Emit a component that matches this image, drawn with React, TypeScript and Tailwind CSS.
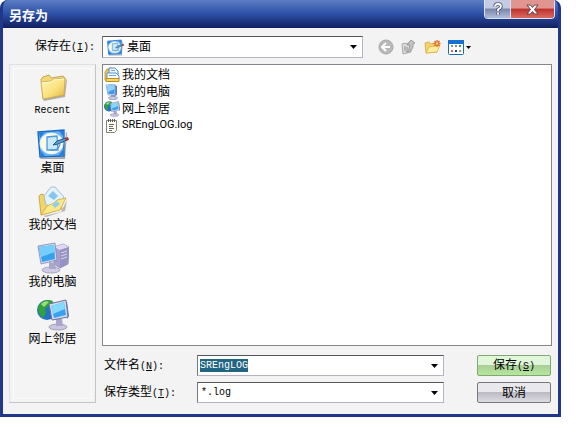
import React from 'react';

const latin = "font-['Liberation_Mono','Noto_Sans_CJK_SC',monospace] text-[10px]";

function FolderIcon() {
  return (
    <svg width="32" height="32" viewBox="0 0 32 32" aria-hidden="true">
      <defs>
        <linearGradient id="folder" x1="0" y1="0" x2="1" y2="1">
          <stop offset="0" stopColor="#fff7b8" />
          <stop offset="0.55" stopColor="#fbe27e" />
          <stop offset="1" stopColor="#e0b23e" />
        </linearGradient>
      </defs>
      <path d="M6 28 L27 24 L29 8 L30 9 L28 26 L7 30Z" fill="#777" opacity="0.55" />
      <path d="M4 8 L6 6 L12 4 L14 7 L26 5 L28 7 L27 24 L6 28Z" fill="#f3d772" stroke="#b8974a" strokeWidth="0.8" />
      <path d="M4 11 L14 10 L17 8 L28 7 L27 24 L6 28Z" fill="url(#folder)" stroke="#cda94c" strokeWidth="0.8" />
      <path d="M5 12 L14 11 L17 9 L27 8" fill="none" stroke="#fffbd6" />
    </svg>
  );
}

function DesktopIcon({ size = 32 }: { size?: number }) {
  return (
    <svg width={size} height={size} viewBox="0 0 32 32" aria-hidden="true">
      <path d="M3 30 L27 29 L29 4 L30 5 L28 31 L4 31Z" fill="#555" opacity="0.5" />
      <path d="M1 4 L27 2 L27 28 L3 29Z" fill="#5fb2f4" stroke="#1c6ac4" strokeWidth="1.4" />
      <path d="M2 5 L8 4 L3 10Z M22 3 L26 3 L26 8Z M3 22 L8 28 L4 28Z M26 22 L26 27 L21 28Z" fill="#2b7cdc" />
      <ellipse cx="14.500" cy="15.500" rx="11.500" ry="10.500" fill="#fbfbe4" stroke="#dff0fa" />
      <path d="M10 9 L20 8 L21 22 L10 22Z" fill="#c9e9fc" stroke="#4c97e0" strokeWidth="1.3" />
      <path d="M13 22 Q22 23 23 16" fill="none" stroke="#4e95dc" strokeWidth="1.2" />
      <path d="M16 17 L20 13 L29 10 L30 12 L21 16Z" fill="#5aa0d4" stroke="#24588f" />
      <path d="M28 10 L31 9 L32 12 L29 13Z" fill="#a8322c" />
    </svg>
  );
}

function DocumentsIcon() {
  return (
    <svg width="32" height="32" viewBox="0 0 32 32" aria-hidden="true">
      <path d="M6 31 L24 27 L30 15 L28 26 L9 32Z" fill="#777" opacity="0.5" />
      <path d="M2 11 L4 9 L7 10 L9 12 L23 9 L25 24 L4 30Z" fill="#f2d566" stroke="#c09a3c" strokeWidth="0.8" />
      <path d="M7 11 L14 2 L18 2 L27 12 L22 23 L9 20Z" fill="#e4f2fc" stroke="#8db4d2" strokeWidth="0.8" />
      <path d="M11 11 L16 6 L21 11 L17 15Z" fill="#88c4f0" />
      <path d="M4 30 L10 21 L17 18 L20 15 L29 13 L23 25Z" fill="#fbe88a" stroke="#d0a943" strokeWidth="0.8" />
      <path d="M15 20 L20 16 L23 19 L18 23Z" fill="#8fd0ee" />
    </svg>
  );
}

function ComputerIcon() {
  return (
    <svg width="32" height="32" viewBox="0 0 32 32" aria-hidden="true">
      <path d="M17 5 L26 2 L32 5 L31 22 L23 26 L17 22Z" fill="#a5a0ce" stroke="#8a86b4" strokeWidth="0.8" />
      <path d="M17 5 L26 2 L32 5 L23 8Z" fill="#dcdaf0" />
      <path d="M23 8 L32 5 L31 22 L23 26Z" fill="#9692c2" />
      <path d="M24 11 L30 9 M24 14 L30 12 M24 17 L30 15" stroke="#d9d7ec" />
      <ellipse cx="14" cy="28" rx="9" ry="3" fill="#cfcbe4" stroke="#9a96bb" strokeWidth="0.8" />
      <path d="M12 20 L18 21 L19 27 L12 27Z" fill="#aaa6ca" />
      <path d="M1 4 L18 1 L20 18 L4 22Z" fill="#d5d6ec" stroke="#7d86b2" strokeWidth="0.8" />
      <path d="M2 5 L17 3 L18 17 L5 20Z" fill="#36a2ee" />
      <path d="M2 5 L17 3 L18 10 L4 15Z" fill="#74cffc" />
    </svg>
  );
}

function NetworkIcon({ size = 32 }: { size?: number }) {
  return (
    <svg width={size} height={size} viewBox="0 0 32 32" aria-hidden="true">
      <circle cx="10" cy="11" r="10" fill="#2372c8" />
      <path d="M2 6 Q8 -1 16 2 L13 7 L8 9 L9 14 L6 19 Q1 15 1 9Z" fill="#31a13b" />
      <path d="M4 5 Q8 1 12 3 L7 8Z" fill="#9be073" />
      <path d="M30 3 L32 17 L30 20 L28 3Z" fill="#706b9b" />
      <ellipse cx="21" cy="28" rx="9" ry="3" fill="#cac6df" stroke="#928eb3" strokeWidth="0.8" />
      <path d="M19 20 L25 20 L26 27 L19 27Z" fill="#aaa5ca" />
      <path d="M12 5 L29 1 L31 18 L15 21Z" fill="#d9dbed" stroke="#6873a2" />
      <path d="M14 7 L27 3 L29 16 L17 19Z" fill="#36a2ee" />
      <path d="M14 7 L27 3 L28 10 L16 15Z" fill="#84dafa" />
    </svg>
  );
}

function SmallComputerIcon() {
  return (
    <svg width="16" height="16" viewBox="0 0 16 16" aria-hidden="true">
      <path d="M11 1 L13 2 V11 L11 12Z" fill="#6b78ae" />
      <path d="M2 1 L11 0 V11 L4 11Z" fill="#dbe4f6" stroke="#8fa6d2" strokeWidth="0.8" />
      <path d="M3 2 L10.500 1 V10 L4.500 10Z" fill="#3f9aee" />
      <path d="M3 2 L10.500 1 V5 L4 8Z" fill="#8fd2fc" />
      <path d="M7 11 H11 V13 H7Z" fill="#8d93c0" />
      <ellipse cx="9" cy="14" rx="4.500" ry="1.600" fill="#c9cce4" stroke="#8f93ba" strokeWidth="0.8" />
    </svg>
  );
}

function SmallDocumentsIcon() {
  return (
    <svg width="16" height="16" viewBox="0 0 16 16" aria-hidden="true">
      <path d="M1 5 L3 2 H7 V14 H2 L1 13Z" fill="#f5c94c" stroke="#b9892a" strokeWidth="0.8" />
      <path d="M5 1 H11 L14 4 V9 H5Z" fill="#f0f7ff" stroke="#4f87c6" />
      <path d="M3 6 H12 L15 9 V12 H3Z" fill="#fff" stroke="#5b92cf" />
      <path d="M7 3.500 H11 M5 8.500 H12" stroke="#69a9df" />
      <path d="M2 14.500 V11.500 H15 V14.500Z" fill="#fbd768" stroke="#bf8c25" />
    </svg>
  );
}

function LogIcon() {
  return (
    <svg width="16" height="16" viewBox="0 0 16 16" aria-hidden="true">
      <path d="M2.500 2.500 H12.500 V12.500 L10.500 14.500 H2.500Z" fill="#fffff0" stroke="#85857a" />
      <path d="M4.500 1 V4 M6.500 1 V4 M8.500 1 V4 M10.500 1 V4" stroke="#5c5c54" />
      <path d="M5 6.500 H10 M5 8.500 H9 M5 10.500 H10 M5 12.500 H8" stroke="#5f6b78" />
    </svg>
  );
}

const places = [
  { label: 'Recent', icon: <FolderIcon />, mono: true },
  { label: '桌面', icon: <DesktopIcon /> },
  { label: '我的文档', icon: <DocumentsIcon /> },
  { label: '我的电脑', icon: <ComputerIcon /> },
  { label: '网上邻居', icon: <NetworkIcon /> },
];

const files = [
  { label: '我的文档', icon: <SmallDocumentsIcon /> },
  { label: '我的电脑', icon: <SmallComputerIcon /> },
  { label: '网上邻居', icon: <NetworkIcon size={16} /> },
  { label: 'SREngLOG.log', icon: <LogIcon />, latin: true },
];

function Arrow() {
  return (
    <svg width="7" height="4" viewBox="0 0 7 4" className="shrink-0 pointer-events-none" aria-hidden="true">
      <path d="M0 0 H7 L3.500 4Z" fill="#000" />
    </svg>
  );
}

function Accel({ letter, colon = true }: { letter: string; colon?: boolean }) {
  return (
    <span className={latin}>
      (<u className="underline-offset-1">{letter}</u>){colon && ':'}
    </span>
  );
}

const box = 'flex items-center border border-[#b4b4c2] border-t-[#55555c] border-l-[#77777f] bg-white';

export default function App() {
  const nameRef = React.useRef<HTMLInputElement>(null);

  React.useEffect(() => {
    nameRef.current?.focus();
    nameRef.current?.select();
  }, []);

  return (
    <div className="bg-white pr-[15px] font-['Liberation_Sans','Noto_Sans_CJK_SC',sans-serif] text-xs text-black">
      <div className="overflow-hidden rounded-t-lg border-x-[3px] border-b-[3px] border-[#21388a] bg-[#21388a]">
        <header className="-mx-[3px] flex h-7 items-start justify-between bg-linear-to-b from-[#5c7dc4] via-[#2d4fa6] to-[#11205f] pr-1.5 pl-[9px]">
          <h1 className="pt-2 text-[13px] leading-4 font-bold text-white">另存为</h1>
          <div className="flex h-[19px] overflow-hidden rounded-b-[4px] border border-t-0 border-[#dce2f2]">
            <button type="button" aria-label="帮助" className="flex w-[26px] items-center justify-center border-r border-[#dce2f2] bg-linear-to-b from-[#c3cce2] from-45% via-[#7685ab] via-50% to-[#b3bedb]">
              <svg width="12" height="14" viewBox="0 0 12 14" aria-hidden="true">
                <path d="M3 4.500 Q3 2 6 2 Q9 2 9 4.500 Q9 6 6 7.500 V9 M6 10.500 V12.500" fill="none" stroke="#4c5470" strokeWidth="3.500" />
                <path d="M3 4.500 Q3 2 6 2 Q9 2 9 4.500 Q9 6 6 7.500 V9 M6 10.500 V12.500" fill="none" stroke="#fff" strokeWidth="1.800" />
              </svg>
            </button>
            <button type="button" aria-label="关闭" className="flex w-[43px] items-center justify-center bg-linear-to-b from-[#e09590] from-45% via-[#bb2f2d] via-50% to-[#dd6a5e]">
              <svg width="13" height="11" viewBox="0 0 13 11" aria-hidden="true">
                <path d="M1 1 H4.500 L6.500 3.500 L8.500 1 H12 L8.500 5.500 L12 10 H8.500 L6.500 7.500 L4.500 10 H1 L4.500 5.500Z" fill="#fff" stroke="#634050" />
              </svg>
            </button>
          </div>
        </header>

        <main className="bg-[#f3f3f3] pt-2 pr-1.5 pb-[11px] pl-1.5">
          <div className="flex items-center">
            <label htmlFor="folder-select" className="w-[93px] shrink-0 pl-[26px] leading-4 whitespace-nowrap">
              保存在<Accel letter="I" />
            </label>
            <div className={`${box} h-[22px] w-[48%] pr-[5px] pl-1`}>
              <DesktopIcon size={17} />
              <select id="folder-select" className="h-full flex-1 appearance-none bg-transparent pl-[3px] outline-none">
                <option>桌面</option>
              </select>
              <Arrow />
            </div>
            <div className="flex items-center gap-[7px] pl-[15px]">
              <button type="button" aria-label="后退">
                <svg width="16" height="16" viewBox="0 0 16 16" aria-hidden="true">
                  <circle cx="8" cy="8" r="7" fill="#b9b9b9" stroke="#a8a8a8" />
                  <path d="M12 8 H5 M8 4 L4 8 L8 12" fill="none" stroke="#fff" strokeWidth="2" />
                </svg>
              </button>
              <button type="button" aria-label="向上一级">
                <svg width="16" height="16" viewBox="0 0 16 16" aria-hidden="true">
                  <path d="M1 5 L4 4 L5 5 L10 3 V13 L2 15Z" fill="#dcdcdc" stroke="#a9a9a9" />
                  <path d="M5 13 Q9 11 9 6 L6 6 L10 1 L14 4 L12 5 Q13 12 5 13Z" fill="#c4c4c4" stroke="#8b8b8b" strokeWidth="0.8" />
                  <path d="M4 7 V12 M6 8 V11" stroke="#929292" />
                </svg>
              </button>
              <button type="button" aria-label="新建文件夹">
                <svg width="17" height="16" viewBox="0 0 17 16" aria-hidden="true">
                  <path d="M1 4 L5 3 L7 5 L12 4 L13 13 L2 14Z" fill="#f6d26a" stroke="#cfa647" strokeWidth="0.8" />
                  <path d="M2 14 L5 8 L16 6 L13 13Z" fill="#ffee9c" stroke="#d8af4f" strokeWidth="0.8" />
                  <path d="M13 1 V8 M9.500 4.500 H16.500 M10.500 2 L15.500 7 M15.500 2 L10.500 7" stroke="#e06b22" strokeWidth="1.3" />
                  <circle cx="13" cy="4.500" r="1.300" fill="#ffd67a" />
                </svg>
              </button>
              <button type="button" aria-label="查看" className="flex items-center gap-0.5">
                <svg width="16" height="15" viewBox="0 0 16 15" aria-hidden="true">
                  <rect x="0.500" y="0.500" width="15" height="14" rx="1" fill="#fff" stroke="#176bc2" />
                  <path d="M0 0 H16 V4 H0Z" fill="#1670cf" />
                  <path d="M3 5 H5 V7 H3Z M11 10 H13 V12 H11Z" fill="#8a9a72" />
                  <path d="M7 5 H9 V7 H7Z" fill="#5b8fd6" />
                  <path d="M11 5 H13 V7 H11Z" fill="#3b9551" />
                  <path d="M3 10 H5 V12 H3Z" fill="#d06951" />
                  <path d="M7 10 H9 V12 H7Z" fill="#233f91" />
                </svg>
                <svg width="5" height="3" viewBox="0 0 5 3" aria-hidden="true">
                  <path d="M0 0 H5 L2.500 3Z" fill="#000" />
                </svg>
              </button>
            </div>
          </div>

          <div className="mt-1.5 flex gap-1.5">
            <nav className="flex w-[87px] shrink-0 flex-col gap-[9px] border border-[#e0e0e4] border-r-[#c3c3ca] border-b-[#c3c3ca] bg-[#f4f4f4] pt-1.5 shadow-[inset_0_0_0_3px_#f3f3f3,inset_0_0_0_4px_#fbfbfb]">
              {places.map((place) => (
                <button key={place.label} type="button" className="flex flex-col items-center">
                  {place.icon}
                  <span className={`leading-4 ${place.mono ? "font-['Liberation_Mono',monospace] text-[10px]" : ''}`}>{place.label}</span>
                </button>
              ))}
            </nav>

            <div className="min-w-0 flex-1">
              <ul className="min-h-[282px] border border-[#85858b] bg-white pt-px pl-px">
                {files.map((file) => (
                  <li key={file.label} className="flex h-[17px] items-center gap-0.5">
                    {file.icon}
                    <span className={file.latin ? "font-['Roboto',sans-serif] text-[11px]" : ''}>{file.label}</span>
                  </li>
                ))}
              </ul>

              <div className="mt-[9px] flex gap-[33px] pr-px">
                <div className="grid flex-1 grid-cols-[95px_1fr] items-center gap-y-[6px]">
                  <label htmlFor="file-name" className="pl-0.5">
                    文件名<Accel letter="N" />
                  </label>
                  <div className={`${box} h-[21px] pr-[5px] pl-0.5`}>
                    <input
                      id="file-name"
                      ref={nameRef}
                      defaultValue="SREngLOG"
                      className="min-w-0 flex-1 bg-transparent font-['Liberation_Mono',monospace] text-[10px] caret-transparent outline-none selection:bg-[#206582] selection:text-white"
                    />
                    <Arrow />
                  </div>
                  <label htmlFor="file-type" className="pl-0.5">
                    保存类型<Accel letter="T" />
                  </label>
                  <div className={`${box} h-[21px] pr-[5px] pl-[3px]`}>
                    <select id="file-type" className="min-w-0 flex-1 appearance-none bg-transparent font-['Liberation_Mono',monospace] text-[10px] outline-none">
                      <option>*.log</option>
                    </select>
                    <Arrow />
                  </div>
                </div>
                <div className="flex w-[74px] flex-col gap-[6px]">
                  <button type="button" className="h-[21px] rounded-[2px] border border-[#7fa970] bg-linear-to-b from-[#e2f7da] from-45% via-[#a9cf98] via-50% to-[#b5e79c] leading-4">
                    保存<Accel letter="S" colon={false} />
                  </button>
                  <button type="button" className="h-[21px] rounded-[2px] border border-[#77777e] bg-linear-to-b from-[#e9e9ed] from-45% via-[#bcbbc4] via-50% to-[#dddce2] leading-4">
                    取消
                  </button>
                </div>
              </div>
            </div>
          </div>
        </main>
      </div>
    </div>
  );
}
